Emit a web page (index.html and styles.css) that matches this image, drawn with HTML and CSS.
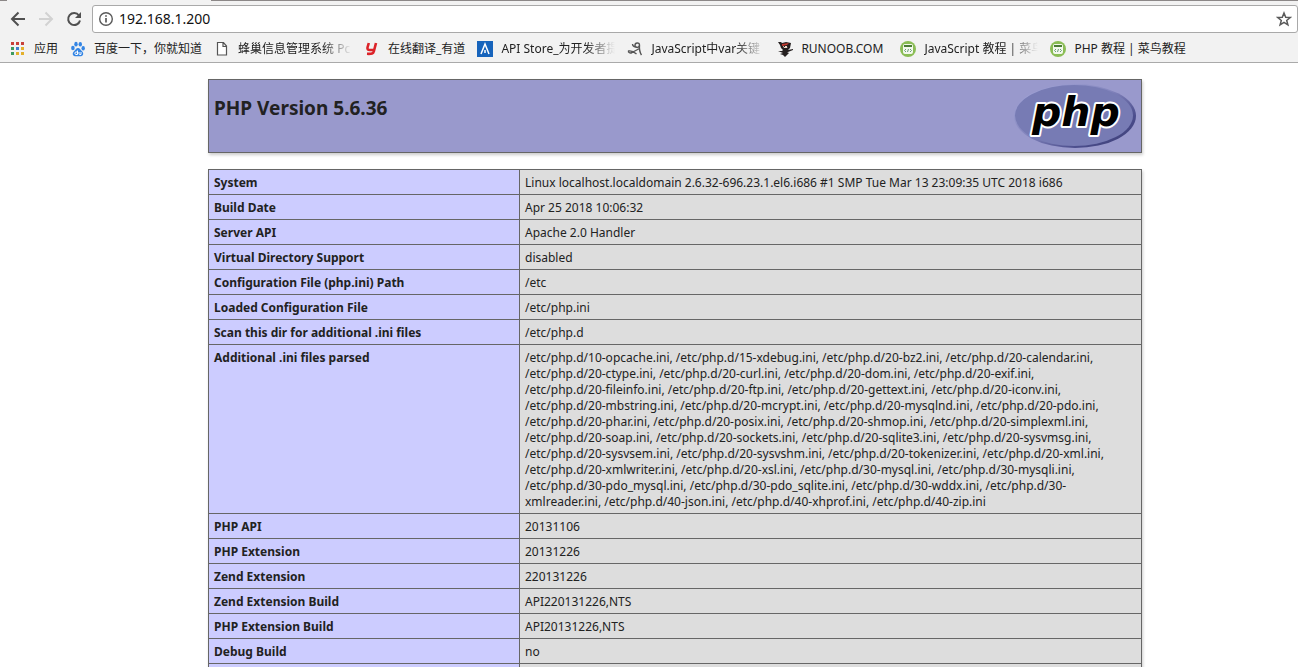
FILE: index.html
```html
<!DOCTYPE html>
<html lang="zh-CN">
<head>
<meta charset="utf-8">
<title>phpinfo()</title>
<link rel="stylesheet" href="styles.css">
</head>
<body>
<header class="browser">
  <div class="tabstrip"><span class="tab-edge"></span><span class="tab-active"></span><span class="tab-rest"></span></div>
  <div class="toolbar">
    <button class="nav-button" aria-label="Back"><svg width="16" height="16" viewBox="0 0 16 16" fill="none" stroke="#505050" stroke-width="2"><path d="M15 8H3M8.500 1.500L2 8l6.500 6.500"/></svg></button>
    <button class="nav-button" aria-label="Forward" disabled><svg width="16" height="16" viewBox="0 0 16 16" fill="none" stroke="#d2d2d2" stroke-width="2"><path d="M1 8h12M7.500 1.500L14 8l-6.500 6.500"/></svg></button>
    <button class="nav-button" aria-label="Reload"><svg width="16" height="16" viewBox="0 0 16 16" fill="none" stroke="#505050" stroke-width="2"><path d="M13 4.500A6 6 0 1 0 14 9.500"/><path d="M15 1v6H9z" fill="#505050" stroke="none"/></svg></button>
    <div class="address">
      <svg width="16" height="16" viewBox="0 0 16 16" fill="none" stroke="#5a5a5a" stroke-width="1.400"><circle cx="8" cy="8" r="6.300"/><path d="M8 7v4.500M8 4.300v1.500" stroke-width="1.700"/></svg>
      <input class="address-input" type="text" value="192.168.1.200" aria-label="Address">
      <button class="star-button" aria-label="Bookmark this page"><svg width="16" height="16" viewBox="0 0 16 16" fill="none" stroke="#5a5a5a" stroke-width="1.500"><path d="M8 2l1.700 4.200 4.500.3-3.500 2.900 1.200 4.500L8 11.400l-3.900 2.500 1.200-4.500-3.500-2.900 4.500-.3z"/></svg></button>
    </div>
  </div>
  <nav class="bookmarks">
    <a class="bookmark" href="#"><svg width="16" height="16" viewBox="0 0 16 16"><path fill="#c8413b" d="M1 1h3v3H1zM6 1h3v3H6zM11 1h3v3h-3z"/><path fill="#3d9a5f" d="M1 6h3v3H1z"/><path fill="#3f7fd0" d="M6 6h3v3H6z"/><path fill="#e3b02c" d="M11 6h3v3h-3zM6 11h3v3H6zM11 11h3v3h-3z"/><path fill="#3d9a5f" d="M1 11h3v3H1z"/></svg><span class="label">应用</span></a>
    <a class="bookmark" href="#"><svg width="16" height="16" viewBox="0 0 16 16" fill="#3485e4"><ellipse cx="2.900" cy="7" rx="1.800" ry="2.300"/><ellipse cx="6" cy="3.200" rx="1.700" ry="2.400"/><ellipse cx="10.300" cy="3.300" rx="1.700" ry="2.300"/><ellipse cx="13.200" cy="7.300" rx="1.700" ry="2.200"/><path d="M8 7c2 0 2.500 2 4 3.300 2 1.800 1.500 4.700-1 4.900-1.500.1-4.500.1-6 0-2.600-.2-3-3.100-1-4.900C5.500 9 6 7 8 7z"/><path d="M7.500 9.500v4H6c-1.500 0-1.500-2.500 0-2.500h1.500M9 11v1.800c0 .7.500.7 2 .7V11" fill="none" stroke="#fff"/></svg><span class="label">百度一下，你就知道</span></a>
    <a class="bookmark" href="#"><svg width="16" height="16" viewBox="0 0 16 16" fill="#fff" stroke="#555" stroke-width="1.200"><path d="M3.500 1.500h6l3 3.500v9h-9zM9 1.500V5.500h3.500"/></svg><span class="label fade">蜂巢信息管理系统 Pc</span></a>
    <a class="bookmark" href="#"><svg width="16" height="16" viewBox="0 0 16 16" fill="none" stroke="#dc2329" stroke-width="2.600"><path d="M4.800 2L3.500 6.500c-.4 2 .8 2.500 2.200 2.500h4M12 2L9.800 10.500C9.200 12.700 8 13 3 12.800"/></svg><span class="label">在线翻译_有道</span></a>
    <a class="bookmark" href="#"><svg width="16" height="16" viewBox="0 0 16 16"><path fill="#1764bc" d="M0 0h16v16H0z"/><path d="M4 13L8 3l4 10M8 9v3" fill="none" stroke="#fff" stroke-width="1.500"/></svg><span class="label fade">API Store_为开发者提</span></a>
    <a class="bookmark" href="#"><svg width="16" height="16" viewBox="0 0 16 16" fill="none" stroke="#555" stroke-width="1.400"><path d="M5.500 3c0 2 2 3.500 4.500 3M12.500 4c0-3-4.500-2.500-4.500.2S12 7.500 12.500 4c-.3 3.500 0 7 2 10M12.500 7.500L5 11.500c-2 1-4 0-3.500-1.500 2-.5 5 .5 8 3"/></svg><span class="label fade">JavaScript中var关键</span></a>
    <a class="bookmark" href="#"><svg width="16" height="16" viewBox="0 0 16 16"><path fill="#252020" d="M1 1h3l1 1 4-1 5 1-1 5-2 2 5-1v1l-5 2h-1l2 1-2 2-2 2-2-2-3-1 3-1-5-2 4 0 1-1-2-2-1-3z"/><path fill="#c6392e" d="M5 3l7-1-2 2-5 1z"/><path fill="#f0dccb" d="M6 5h5l-1 2H7z"/><path fill="#252020" d="M7 5h1v1H7zM10 5h1v1h-1z"/></svg><span class="label site">RUNOOB.COM</span></a>
    <a class="bookmark" href="#"><svg width="16" height="16" viewBox="0 0 16 16"><circle cx="8" cy="8" r="8" fill="#8abd55"/><rect x="3" y="3" width="10" height="10" rx="2" fill="#f3f8ed"/><path fill="#4b7b36" d="M4 4h8v2H4z"/><path d="M6 8L4.500 9.500 6 11M10 8l1.500 1.500L10 11M8.500 8l-1 3" stroke="#679d78" fill="none"/></svg><span class="label fade">JavaScript 教程 | 菜鸟</span></a>
    <a class="bookmark" href="#"><svg width="16" height="16" viewBox="0 0 16 16"><circle cx="8" cy="8" r="8" fill="#8abd55"/><rect x="3" y="3" width="10" height="10" rx="2" fill="#f3f8ed"/><path fill="#4b7b36" d="M4 4h8v2H4z"/><path d="M6 8L4.500 9.500 6 11M10 8l1.500 1.500L10 11M8.500 8l-1 3" stroke="#679d78" fill="none"/></svg><span class="label">PHP 教程 | 菜鸟教程</span></a>
  </nav>
</header>
<main class="page">
  <div class="center">
    <section class="banner">
      <h1 class="version">PHP Version 5.6.36</h1>
      <svg class="logo" width="122" height="66" viewBox="0 0 122 66" role="img" aria-label="PHP logo">
        <defs><linearGradient id="rim" x1="0" y1="0" x2="1" y2="1"><stop offset="0" stop-color="#a9abdc"/><stop offset=".45" stop-color="#8385bd"/><stop offset=".75" stop-color="#4b4d8c"/><stop offset="1" stop-color="#383a70"/></linearGradient></defs>
        <ellipse cx="61" cy="33" rx="61" ry="32" fill="url(#rim)"/>
        <ellipse cx="60" cy="32.500" rx="59" ry="30.500" fill="#777bb4"/>
        <text class="logo-text" x="18" y="43">php</text>
      </svg>
    </section>
    <table class="info">
      <tbody>
      <tr><th scope="row">System</th><td>Linux localhost.localdomain 2.6.32-696.23.1.el6.i686 #1 SMP Tue Mar 13 23:09:35 UTC 2018 i686</td></tr>
      <tr><th scope="row">Build Date</th><td>Apr 25 2018 10:06:32</td></tr>
      <tr><th scope="row">Server API</th><td>Apache 2.0 Handler</td></tr>
      <tr><th scope="row">Virtual Directory Support</th><td>disabled</td></tr>
      <tr><th scope="row">Configuration File (php.ini) Path</th><td>/etc</td></tr>
      <tr><th scope="row">Loaded Configuration File</th><td>/etc/php.ini</td></tr>
      <tr><th scope="row">Scan this dir for additional .ini files</th><td>/etc/php.d</td></tr>
      <tr><th scope="row">Additional .ini files parsed</th><td>/etc/php.d/10-opcache.ini, /etc/php.d/15-xdebug.ini, /etc/php.d/20-bz2.ini, /etc/php.d/20-calendar.ini,<br>/etc/php.d/20-ctype.ini, /etc/php.d/20-curl.ini, /etc/php.d/20-dom.ini, /etc/php.d/20-exif.ini,<br>/etc/php.d/20-fileinfo.ini, /etc/php.d/20-ftp.ini, /etc/php.d/20-gettext.ini, /etc/php.d/20-iconv.ini,<br>/etc/php.d/20-mbstring.ini, /etc/php.d/20-mcrypt.ini, /etc/php.d/20-mysqlnd.ini, /etc/php.d/20-pdo.ini,<br>/etc/php.d/20-phar.ini, /etc/php.d/20-posix.ini, /etc/php.d/20-shmop.ini, /etc/php.d/20-simplexml.ini,<br>/etc/php.d/20-soap.ini, /etc/php.d/20-sockets.ini, /etc/php.d/20-sqlite3.ini, /etc/php.d/20-sysvmsg.ini,<br>/etc/php.d/20-sysvsem.ini, /etc/php.d/20-sysvshm.ini, /etc/php.d/20-tokenizer.ini, /etc/php.d/20-xml.ini,<br>/etc/php.d/20-xmlwriter.ini, /etc/php.d/20-xsl.ini, /etc/php.d/30-mysql.ini, /etc/php.d/30-mysqli.ini,<br>/etc/php.d/30-pdo_mysql.ini, /etc/php.d/30-pdo_sqlite.ini, /etc/php.d/30-wddx.ini, /etc/php.d/30-<br>xmlreader.ini, /etc/php.d/40-json.ini, /etc/php.d/40-xhprof.ini, /etc/php.d/40-zip.ini</td></tr>
      <tr><th scope="row">PHP API</th><td>20131106</td></tr>
      <tr><th scope="row">PHP Extension</th><td>20131226</td></tr>
      <tr><th scope="row">Zend Extension</th><td>220131226</td></tr>
      <tr><th scope="row">Zend Extension Build</th><td>API220131226,NTS</td></tr>
      <tr><th scope="row">PHP Extension Build</th><td>API20131226,NTS</td></tr>
      <tr><th scope="row">Debug Build</th><td>no</td></tr>
      <tr><th scope="row">Thread Safety</th><td>disabled</td></tr>
      </tbody>
    </table>
  </div>
</main>
</body>
</html>
```
FILE: styles.css
```css
* { box-sizing: border-box; }
html, body { height: 100%; }
body {
  margin: 0;
  display: flex;
  flex-direction: column;
  overflow: hidden;
  background: #fff;
  color: #222;
  font: 12px/16px "Noto Sans", "Noto Sans CJK SC", sans-serif;
}
.browser { flex: none; background: #f2f2f2; border-bottom: 1px solid #aaa; }
.tabstrip { display: flex; height: 1px; }
.tab-edge { width: 7px; background: #8c8888; }
.tab-active { width: 204px; }
.tab-rest { flex: 1; background: #8c8888; }
.toolbar { display: flex; align-items: center; padding: 4px 0 0 10px; }
.nav-button, .star-button {
  display: flex;
  padding: 0;
  border: 0;
  background: none;
}
.nav-button { margin-right: 12px; }
.nav-button:nth-child(3) { margin-right: 10px; }
.address {
  flex: 1;
  display: flex;
  align-items: center;
  gap: 5px;
  height: 28px;
  padding: 0 5px;
  background: #fff;
  border: 1px solid #a9a9a9;
  border-radius: 3px;
}
.address-input {
  flex: 1;
  min-width: 0;
  padding: 0;
  border: 0;
  outline: 0;
  background: none;
  color: #111;
  font: 14px/20px "Noto Sans", sans-serif;
}
.bookmarks {
  display: flex;
  gap: 12px;
  height: 29px;
  padding: 2px 10px 0;
  align-items: center;
}
.bookmark {
  flex: none;
  display: flex;
  align-items: center;
  gap: 8px;
  color: #222;
  text-decoration: none;
}
.label { white-space: nowrap; }
.fade {
  width: 114px;
  overflow: hidden;
  -webkit-mask-image: linear-gradient(to right, #000 84px, transparent 114px);
  mask-image: linear-gradient(to right, #000 84px, transparent 114px);
}
.site { min-width: 87px; }
.page { flex: 1; min-height: 0; overflow: hidden; padding: 16px 0 0 52px; }
.center { width: 934px; max-width: 100%; margin: 0 auto; }
.banner {
  display: flex;
  justify-content: space-between;
  margin-bottom: 16px;
  padding: 3px 5px 3px 5px;
  background: #9999cc;
  border: 1px solid #666;
  box-shadow: 1px 2px 3px #ccc;
}
.version { margin: 13px 0 0; font-size: 19px; line-height: 24px; }
.logo-text {
  font: italic bold 41px "DejaVu Sans", sans-serif;
  fill: #000;
  stroke: #fff;
  stroke-width: 4px;
  stroke-linejoin: round;
  paint-order: stroke;
}
.info {
  width: 100%;
  border-collapse: collapse;
  box-shadow: 1px 2px 3px #ccc;
}
.info th, .info td {
  padding: 5px 5px 3px;
  border: 1px solid #666;
  text-align: left;
  vertical-align: top;
}
.info th { width: 311px; background: #ccccff; font-weight: 700; }
.info td { background: #ddd; }
```
